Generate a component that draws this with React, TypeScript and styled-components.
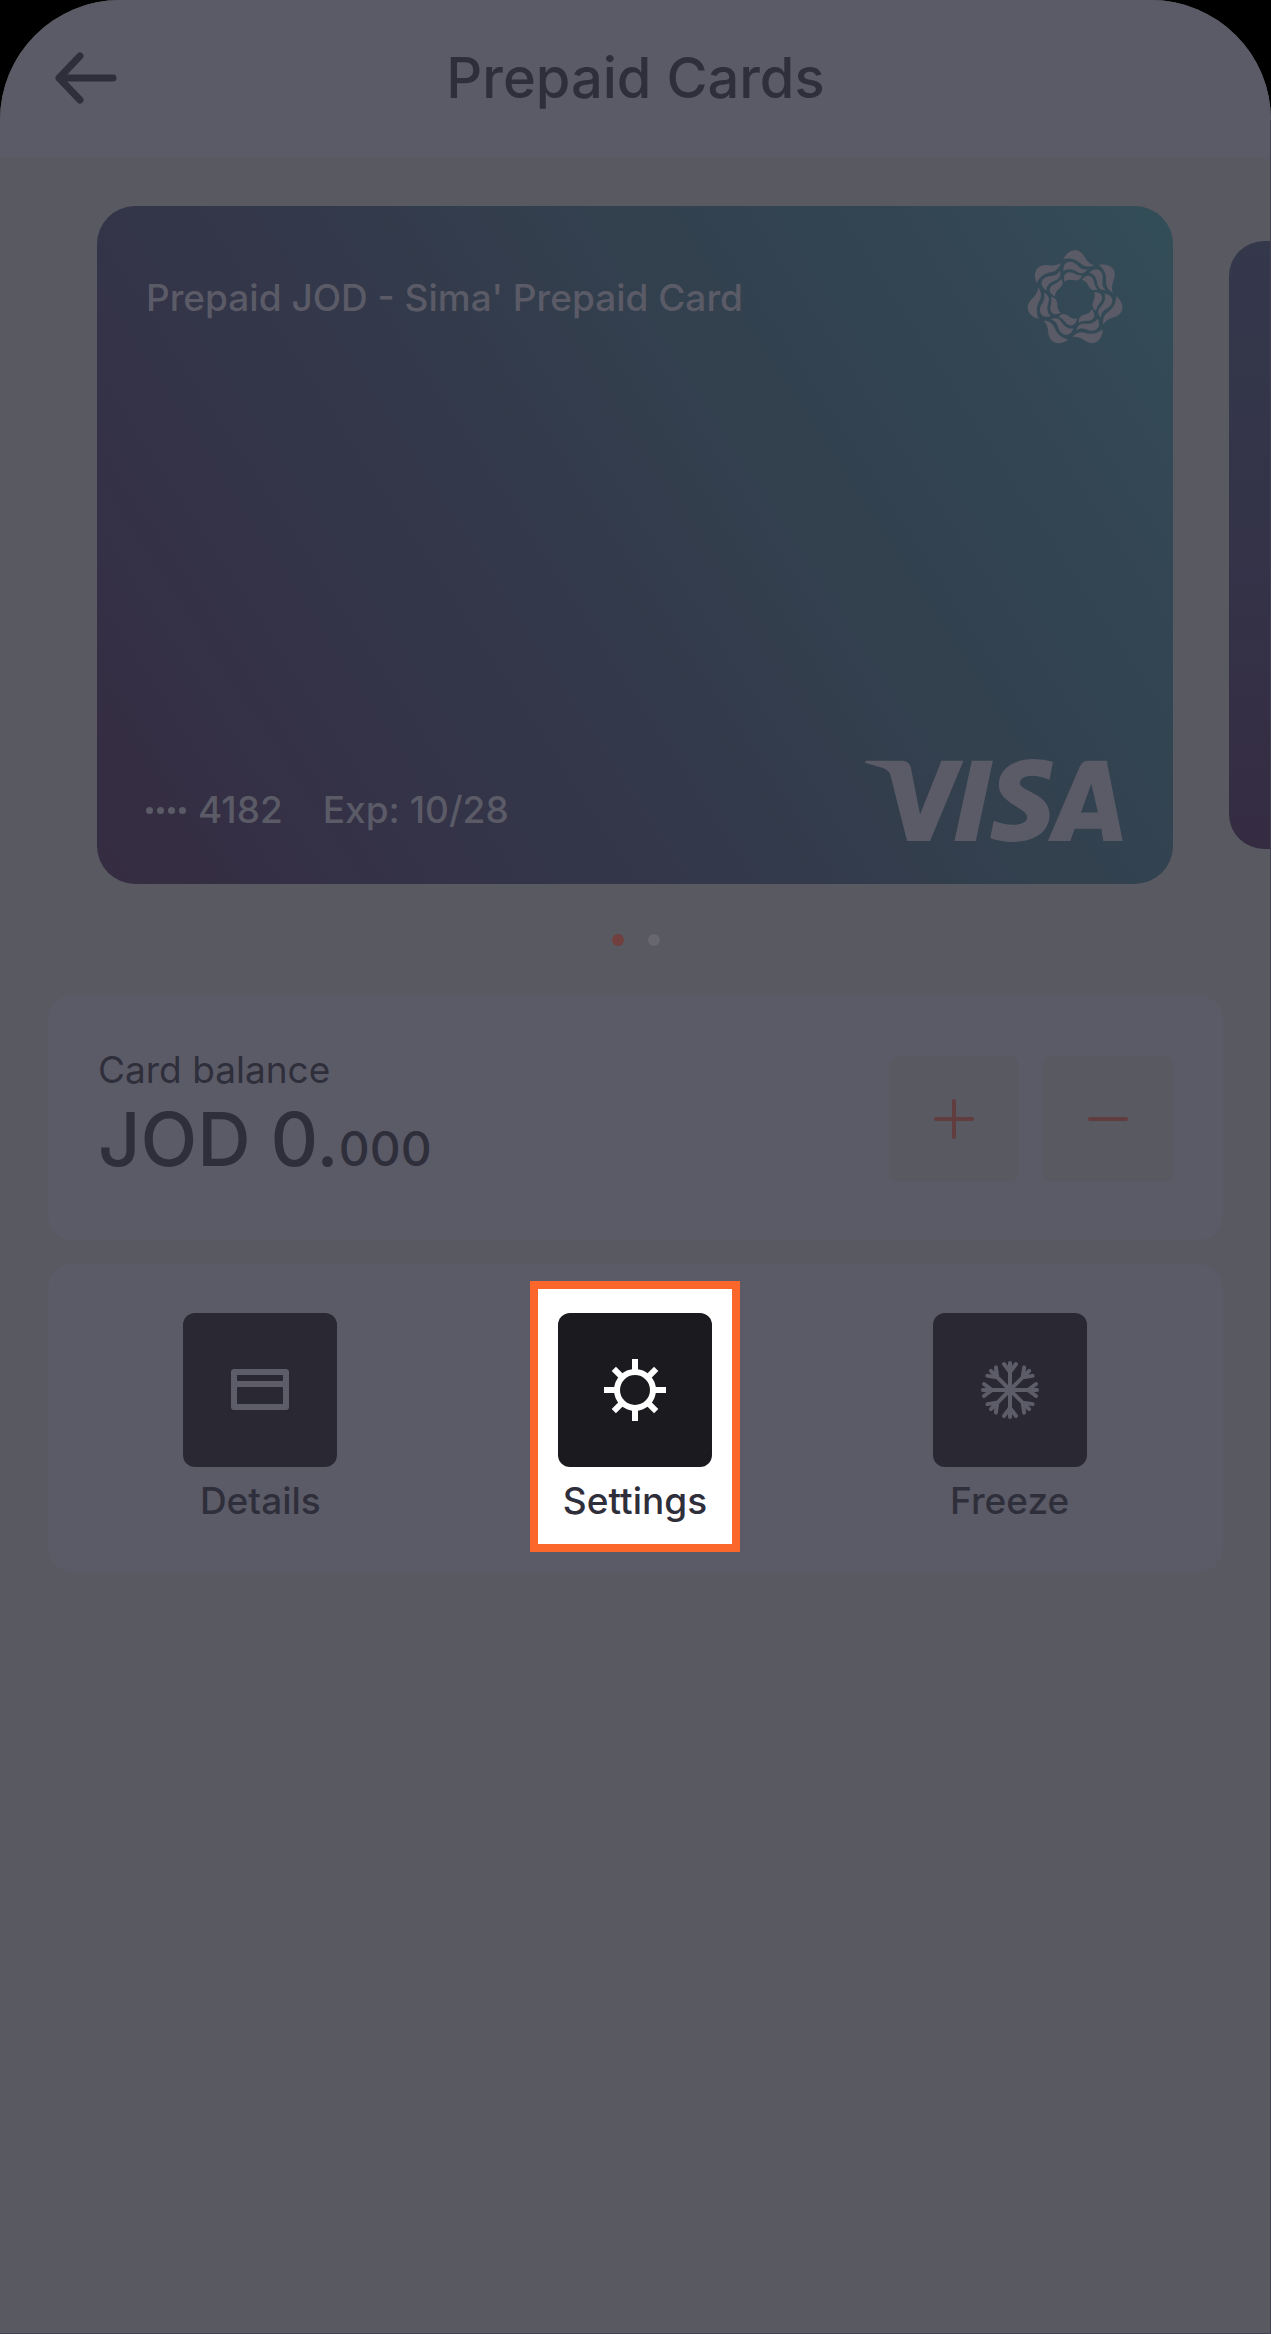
import React from "react";
import styled, { createGlobalStyle } from "styled-components";

const ink = "#2f2e3b";
const pale = "#5b5b67";
const backdrop = "#595962";

const GlobalStyle = createGlobalStyle`
  *, *::before, *::after { box-sizing: border-box; }
  body {
    margin: 0;
    background: #000;
    font-family: Inter, "Liberation Sans", sans-serif;
    color: ${ink};
  }
  button { font: inherit; color: inherit; border: 0; padding: 0; margin: 0; background: none; cursor: pointer; }
`;

const Screen = styled.div`
  position: relative;
  min-height: 100vh;
  overflow: hidden;
  border-radius: 120px 120px 0 0;
  background: ${backdrop};

  &::after {
    content: "";
    position: absolute;
    inset: 120px 0 0;
    border: solid #41414f;
    border-width: 0 1px 1px 0;
    pointer-events: none;
  }
`;

const Header = styled.header`
  display: grid;
  grid-template-columns: 72px 1fr 72px;
  align-items: center;
  height: 158px;
  padding: 0 49px 2px;
  background: ${pale};
`;

const BackButton = styled.button`
  display: flex;
  align-items: center;
  justify-content: center;
  height: 72px;
`;

const Title = styled.h1`
  margin: 0;
  text-align: center;
  font-size: 56px;
  line-height: 64px;
  font-weight: 500;
`;

const Carousel = styled.section`
  display: flex;
  align-items: center;
  gap: 56px;
  padding: 48px 0 0 97px;
  overflow: hidden;
`;

const cardGradient =
  "linear-gradient(57deg, #352c41 0%, #343348 25%, #33394a 42%, #33404e 62%, #334653 84%, #334e58 100%)";

const PaymentCard = styled.article`
  flex: 0 0 calc(100% - 98px);
  display: flex;
  flex-direction: column;
  justify-content: space-between;
  aspect-ratio: 1076 / 678;
  padding: 44px 50px 42px 49px;
  border-radius: 38px;
  background: ${cardGradient};
  color: ${pale};
  font-size: 37px;
  line-height: 44px;
  font-weight: 500;
`;

const NextCard = styled.div`
  flex: 0 0 80%;
  align-self: stretch;
  margin: 35px 0;
  border-radius: 35px;
  background: linear-gradient(0deg, #352c42 0%, #343348 50%, #34384b 100%);
`;

const CardTop = styled.div`
  display: flex;
  align-items: center;
  justify-content: space-between;
`;

const CardBottom = styled.div`
  display: flex;
  align-items: flex-end;
  justify-content: space-between;
`;

const CardMeta = styled.div`
  display: flex;
  gap: 40px;
  padding-bottom: 10px;
`;

const CardNumber = styled.span`
  display: flex;
  align-items: center;
  gap: 12px;
`;

const MaskDots = styled.span`
  display: flex;
  gap: 4px;

  i {
    width: 7px;
    height: 7px;
    border-radius: 50%;
    background: currentColor;
  }
`;

const Pager = styled.div`
  display: flex;
  justify-content: center;
  gap: 24px;
  padding: 50px 0 49px;
`;

const PagerDot = styled.button<{ $active?: boolean }>`
  width: 12px;
  height: 12px;
  border-radius: 50%;
  background: ${(p) => (p.$active ? "#703f3e" : "#68666f")};
`;

const Panels = styled.main`
  display: flex;
  flex-direction: column;
  gap: 24px;
  padding: 0 48px 48px;
`;

const Panel = styled.section`
  display: flex;
  align-items: center;
  border-radius: 24px;
  background: ${pale};
`;

const BalancePanel = styled(Panel)`
  justify-content: space-between;
  padding: 55px 50px 52px;
`;

const BalanceLabel = styled.div`
  font-size: 37px;
  line-height: 40px;
  font-weight: 400;
`;

const Amount = styled.div`
  font-size: 74px;
  line-height: 98px;
  font-weight: 500;
`;

const Fraction = styled.span`
  font-size: 48px;
  line-height: 48px;
`;

const Adjust = styled.div`
  display: flex;
  gap: 24px;
`;

const AdjustButton = styled.button`
  display: flex;
  align-items: center;
  justify-content: center;
  width: 130px;
  height: 126px;
  border-radius: 10px;
  background: ${backdrop};
  color: #613d40;
`;

const ActionsPanel = styled(Panel)`
  display: grid;
  grid-template-columns: repeat(3, 1fr);
  justify-items: center;
  padding: 17px 26px 20px 25px;
`;

const Action = styled.button<{ $highlighted?: boolean }>`
  display: flex;
  flex-direction: column;
  align-items: center;
  gap: 12px;
  padding: 24px 20px 21px;
  border: 8px solid ${(p) => (p.$highlighted ? "#fb672b" : "transparent")};
  background: ${(p) => (p.$highlighted ? "#fff" : "transparent")};
  font-size: 37px;
  line-height: 44px;
  font-weight: 500;
  white-space: nowrap;
`;

const Tile = styled.span<{ $highlighted?: boolean }>`
  display: flex;
  align-items: center;
  justify-content: center;
  width: 154px;
  height: 154px;
  border-radius: 12px;
  background: ${(p) => (p.$highlighted ? "#1b1a1e" : "#292833")};
  color: ${(p) => (p.$highlighted ? "#fff" : "#5d5c69")};
`;

const BackArrow = () => (
  <svg width="64" height="56" viewBox="0 0 64 56" fill="none" stroke="currentColor" strokeWidth="7" strokeLinecap="round" strokeLinejoin="round" aria-hidden="true">
    <path d="M60 28H6M27 6L6 28L27 50" />
  </svg>
);

const Emblem = () => (
  <svg width="96" height="96" viewBox="78 61 288 288" fill="currentColor" aria-hidden="true">
    {Array.from({ length: 7 }, (_, i) => (
      <g key={i} transform={`rotate(${(i * 360) / 7} 222 207)`}>
        <path d="M187 88C196 71 208 62 222 62C237 62 246 73 253 85C260 97 268 103 279 107C265 113 252 112 241 103C226 89 210 83 187 88Z" />
        <path d="M187 124C187 106 193 97 207 96C221 96 228 107 237 114C244 119 251 121 260 119C251 131 241 134 229 127C216 119 203 115 187 124Z" />
        <path d="M190 156C187 140 191 129 204 128C218 127 224 139 243 137C239 149 232 153 221 152C209 150 201 148 190 156Z" />
      </g>
    ))}
  </svg>
);

const VisaLogo = () => (
  <svg width="258" height="83" viewBox="79 116 773 248" fill="currentColor" role="img" aria-label="Visa">
    <path d="M81 121H190Q213 122 217 145L244 282L308 121H374L274 361H205L155 163Q151 149 130 142L79 127Z" />
    <path d="M399 121H462L411 361H347Z" />
    <path d="M642 124L632 178Q602 166 578 166Q543 168 543 188C543 211 632 219 632 282C632 336 584 364 522 364Q482 363 454 352L465 301Q495 313 523 313Q565 311 565 290C565 262 480 249 480 193C480 145 525 116 583 116Q615 116 642 124Z" />
    <path fillRule="evenodd" d="M748 121H803L851 361H793L787 325H707L694 361H627L722 140Q730 121 748 121ZM757 190L726 276H777Z" />
  </svg>
);

const PlusIcon = () => (
  <svg width="42" height="42" viewBox="0 0 42 42" stroke="currentColor" strokeWidth="4" strokeLinecap="round" aria-hidden="true">
    <path d="M3 21H39M21 3V39" />
  </svg>
);

const MinusIcon = () => (
  <svg width="42" height="42" viewBox="0 0 42 42" stroke="currentColor" strokeWidth="4" strokeLinecap="round" aria-hidden="true">
    <path d="M3 21H39" />
  </svg>
);

const CardIcon = () => (
  <svg width="58" height="42" viewBox="0 0 58 42" fill="none" stroke="currentColor" strokeWidth="6" strokeLinejoin="round" aria-hidden="true">
    <path d="M3 3H55V38H3ZM3 15H55" />
  </svg>
);

const GearIcon = () => (
  <svg width="62" height="62" viewBox="0 0 62 62" fill="none" stroke="currentColor" strokeWidth="6" aria-hidden="true">
    <circle cx="31" cy="31" r="18" />
    {Array.from({ length: 8 }, (_, i) => (
      <path key={i} d={i % 2 ? "M31 12V1" : "M31 11V0"} transform={`rotate(${i * 45} 31 31)`} />
    ))}
  </svg>
);

const SnowIcon = () => (
  <svg width="60" height="60" viewBox="0 0 60 60" fill="none" stroke="currentColor" strokeWidth="4" strokeLinecap="round" aria-hidden="true">
    {Array.from({ length: 8 }, (_, i) => (
      <path key={i} d="M30 30V3M30 12L24 4M30 12L36 4" transform={`rotate(${i * 45} 30 30)`} />
    ))}
    {Array.from({ length: 8 }, (_, i) => (
      <path key={i} d="M28 7L30 11L32 7Z" fill="currentColor" stroke="none" transform={`rotate(${i * 45} 30 30)`} />
    ))}
  </svg>
);

const actions = [
  { label: "Details", icon: <CardIcon />, highlighted: false },
  { label: "Settings", icon: <GearIcon />, highlighted: true },
  { label: "Freeze", icon: <SnowIcon />, highlighted: false },
];

export default function App() {
  return (
    <>
      <GlobalStyle />
      <Screen>
        <Header>
          <BackButton type="button" aria-label="Back">
            <BackArrow />
          </BackButton>
          <Title>Prepaid Cards</Title>
        </Header>

        <Carousel aria-label="Cards">
          <PaymentCard>
            <CardTop>
              <span>Prepaid JOD - Sima' Prepaid Card</span>
              <Emblem />
            </CardTop>
            <CardBottom>
              <CardMeta>
                <CardNumber>
                  <MaskDots aria-hidden="true">
                    <i />
                    <i />
                    <i />
                    <i />
                  </MaskDots>
                  4182
                </CardNumber>
                <span>Exp: 10/28</span>
              </CardMeta>
              <VisaLogo />
            </CardBottom>
          </PaymentCard>
          <NextCard />
        </Carousel>

        <Pager>
          <PagerDot type="button" $active aria-label="Card 1" />
          <PagerDot type="button" aria-label="Card 2" />
        </Pager>

        <Panels>
          <BalancePanel>
            <div>
              <BalanceLabel>Card balance</BalanceLabel>
              <Amount>
                JOD 0.<Fraction>000</Fraction>
              </Amount>
            </div>
            <Adjust>
              <AdjustButton type="button" aria-label="Add money">
                <PlusIcon />
              </AdjustButton>
              <AdjustButton type="button" aria-label="Withdraw money">
                <MinusIcon />
              </AdjustButton>
            </Adjust>
          </BalancePanel>

          <ActionsPanel>
            {actions.map((a) => (
              <Action key={a.label} type="button" $highlighted={a.highlighted}>
                <Tile $highlighted={a.highlighted}>{a.icon}</Tile>
                {a.label}
              </Action>
            ))}
          </ActionsPanel>
        </Panels>
      </Screen>
    </>
  );
}
